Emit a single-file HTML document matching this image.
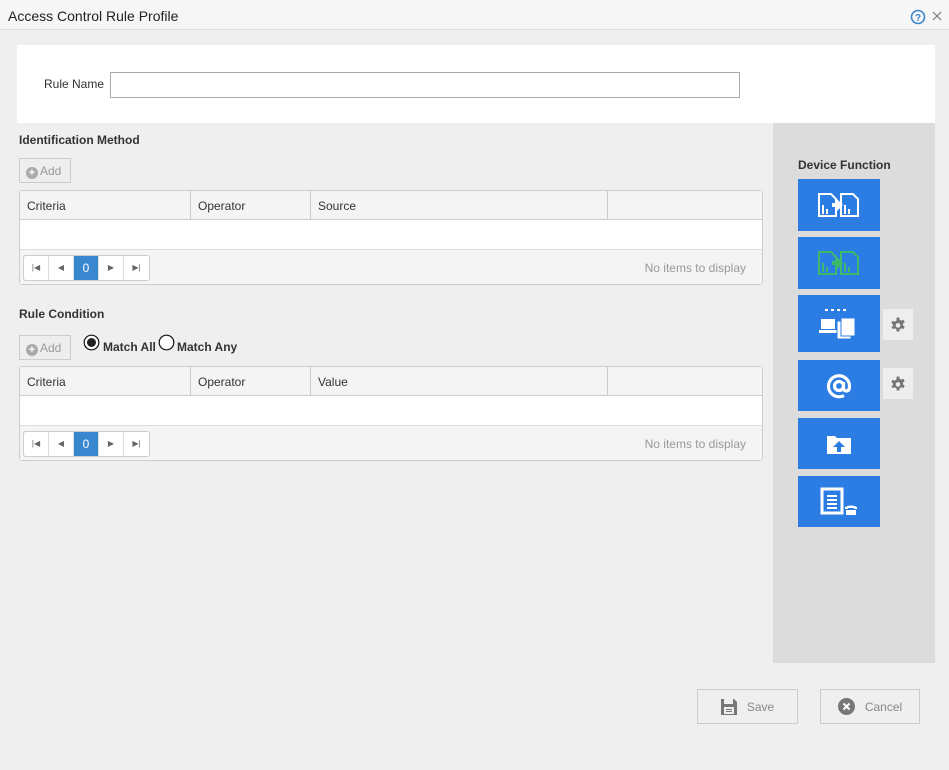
<!DOCTYPE html>
<html><head><meta charset="utf-8"><style>
*{box-sizing:border-box;margin:0;padding:0}
body{width:949px;height:770px;background:#efefef;font-family:"Liberation Sans",Arial,sans-serif;font-size:12px;color:#333;position:relative;overflow:hidden}
.abs{position:absolute}
.title{left:0;top:0;width:949px;height:30px;background:#f6f6f6;border-bottom:1px solid #ddd;font-size:14px;padding:8px 0 0 8px;color:#222}
.white{left:17px;top:45px;width:918px;height:78px;background:#fff}
.inp{left:110px;top:72px;width:630px;height:26px;border:1px solid #aaa;background:#fff}
.lbl{font-size:12px}
.h{font-weight:bold;font-size:12px;color:#333}
.add{width:52px;height:25px;border:1px solid #ccc;background:#eee;color:#999;font-size:12px;padding:5px 0 0 6px}
.add span{display:inline-block;width:12px;height:12px;border-radius:50%;background:#aaa;color:#fff;font-size:11px;line-height:12px;text-align:center;font-weight:bold;margin-right:2px;vertical-align:-1px}
.grid{left:19px;width:744px;border:1px solid #ccc;border-radius:3px;background:#fff}
.gh{height:29px;background:#f4f4f4;border-bottom:1px solid #ccc;display:flex}
.gh div{border-right:1px solid #ccc;padding:8px 7px;font-size:12px}
.gb{height:30px;background:#fff;border-bottom:1px solid #ddd}
.gp{height:34px;background:#f4f4f4;position:relative}
.pager{position:absolute;left:3px;top:5px;height:26px;border:1px solid #ccc;border-radius:3px;display:flex;background:#fff}
.pager div{width:25px;height:24px;text-align:center;line-height:24px;font-size:8px;color:#666;border-right:1px solid #ddd}
.pager .on{background:#3a87cf;color:#fff;font-size:12px}
.noi{position:absolute;right:16px;top:11px;color:#999}
.side{left:773px;top:123px;width:162px;height:540px;background:#dcdcdc}
.bb{left:798px;width:82px;background:#2b7de3;display:flex;align-items:center;justify-content:center}
.gear{left:883px;width:30px;height:31px;background:#eee;display:flex;align-items:center;justify-content:center}
.btn{top:689px;height:35px;border:1px solid #ccc;background:#efefef;color:#888;font-size:12px;display:flex;align-items:center;justify-content:center}
</style></head><body>
<div class="abs title">Access Control Rule Profile</div>
<svg class="abs" style="left:910px;top:9px" width="16" height="16"><circle cx="8" cy="8" r="6.5" fill="none" stroke="#3a87cf" stroke-width="1.6"/><text x="8" y="12" font-size="10" text-anchor="middle" fill="#3a87cf" font-weight="bold" font-family="Liberation Sans">?</text></svg>
<svg class="abs" style="left:932px;top:11px" width="10" height="10"><path d="M1 1L9 9M9 1L1 9" stroke="#777" stroke-width="1.2"/></svg>
<div class="abs white"></div>
<div class="abs lbl" style="left:44px;top:77px">Rule Name</div>
<div class="abs inp"></div>
<div class="abs h" style="left:19px;top:133px">Identification Method</div>
<div class="abs add" style="left:19px;top:158px"><span>+</span>Add</div>
<div class="abs grid" style="top:190px">
<div class="gh"><div style="width:171px">Criteria</div><div style="width:120px">Operator</div><div style="width:297px">Source</div></div>
<div class="gb"></div>
<div class="gp"><div class="pager"><div>|◀</div><div>◀</div><div class="on">0</div><div>▶</div><div style="border:none">▶|</div></div><span class="noi">No items to display</span></div>
</div>
<div class="abs h" style="left:19px;top:307px">Rule Condition</div>
<div class="abs add" style="left:19px;top:335px"><span>+</span>Add</div>
<svg class="abs" style="left:83px;top:334px" width="18" height="18"><circle cx="8.5" cy="8.5" r="7.3" fill="#fff" stroke="#111" stroke-width="1.2"/><circle cx="8.5" cy="8.5" r="4.5" fill="#222"/></svg>
<div class="abs h" style="left:103px;top:340px">Match All</div>
<svg class="abs" style="left:158px;top:334px" width="18" height="18"><circle cx="8.5" cy="8.5" r="7.3" fill="#fff" stroke="#111" stroke-width="1.2"/></svg>
<div class="abs h" style="left:177px;top:340px">Match Any</div>
<div class="abs grid" style="top:366px">
<div class="gh"><div style="width:171px">Criteria</div><div style="width:120px">Operator</div><div style="width:297px">Value</div></div>
<div class="gb"></div>
<div class="gp"><div class="pager"><div>|◀</div><div>◀</div><div class="on">0</div><div>▶</div><div style="border:none">▶|</div></div><span class="noi">No items to display</span></div>
</div>
<div class="abs side"></div>
<div class="abs h" style="left:798px;top:158px">Device Function</div>
<div class="abs bb" style="top:179px;height:52px"><svg width="46" height="28"><g fill="none" stroke="#fff" stroke-width="2"><path d="M3 3h12l5 5v17H3z"/><path d="M25 3h12l5 5v17H25z"/></g><g fill="#fff"><rect x="6" y="14" width="2" height="9"/><rect x="10" y="18" width="2" height="5"/><rect x="28" y="14" width="2" height="9"/><rect x="32" y="18" width="2" height="5"/><path d="M16 12h5v-4l6 6-6 6v-4h-5z"/></g></svg></div>
<div class="abs bb" style="top:237px;height:52px"><svg width="46" height="28"><g fill="none" stroke="#3cba6a" stroke-width="2"><path d="M3 3h12l5 5v17H3z"/><path d="M25 3h12l5 5v17H25z"/></g><g fill="#3cba6a"><rect x="6" y="14" width="2" height="9"/><rect x="10" y="18" width="2" height="5"/><rect x="28" y="14" width="2" height="9"/><rect x="32" y="18" width="2" height="5"/><path d="M16 12h5v-4l6 6-6 6v-4h-5z"/></g></svg></div>
<div class="abs bb" style="top:295px;height:57px"><svg width="40" height="34"><g fill="#fff"><rect x="6" y="2" width="3" height="2"/><rect x="12" y="2" width="3" height="2"/><rect x="18" y="2" width="3" height="2"/><rect x="24" y="2" width="3" height="2"/><rect x="2" y="12" width="14" height="10"/><rect x="0" y="23" width="18" height="3"/><rect x="18" y="14" width="14" height="18" stroke="#2b7de3" stroke-width="1"/><rect x="22" y="11" width="14" height="18" stroke="#2b7de3" stroke-width="1"/></g></svg></div>
<div class="abs gear" style="top:309px"><svg width="16" height="16" viewBox="0 0 16 16"><path d="M6.7 0h2.6l.4 2.2 1.6.9 2.1-.8 1.3 2.3-1.7 1.4v1.9l1.7 1.4-1.3 2.3-2.1-.8-1.6.9-.4 2.3H6.7l-.4-2.3-1.6-.9-2.1.8-1.3-2.3L3 8.9V7L1.3 5.6l1.3-2.3 2.1.8 1.6-.9z" fill="#777" transform="translate(0 .5)"/><circle cx="8" cy="8.4" r="2.3" fill="#eee"/></svg></div>
<div class="abs bb" style="top:360px;height:51px"><svg width="30" height="30" viewBox="0 0 30 30"><circle cx="15" cy="15" r="4.5" fill="none" stroke="#fff" stroke-width="3.2"/><path d="M19.5 11v6q0 3 3 3t3-5A10.5 10.5 0 1 0 20 24.5" fill="none" stroke="#fff" stroke-width="3.2"/></svg></div>
<div class="abs gear" style="top:368px"><svg width="16" height="16" viewBox="0 0 16 16"><path d="M6.7 0h2.6l.4 2.2 1.6.9 2.1-.8 1.3 2.3-1.7 1.4v1.9l1.7 1.4-1.3 2.3-2.1-.8-1.6.9-.4 2.3H6.7l-.4-2.3-1.6-.9-2.1.8-1.3-2.3L3 8.9V7L1.3 5.6l1.3-2.3 2.1.8 1.6-.9z" fill="#777" transform="translate(0 .5)"/><circle cx="8" cy="8.4" r="2.3" fill="#eee"/></svg></div>
<div class="abs bb" style="top:418px;height:51px"><svg width="26" height="22"><path d="M1 3h8l2 2h14v16H1z" fill="#fff"/><path d="M13 8l6 6h-4v5h-4v-5H7z" fill="#2b7de3"/></svg></div>
<div class="abs bb" style="top:476px;height:51px"><svg width="42" height="30"><rect x="4" y="2" width="20" height="24" fill="none" stroke="#fff" stroke-width="3"/><g fill="#fff"><rect x="9" y="8" width="10" height="2"/><rect x="9" y="12" width="10" height="2"/><rect x="9" y="16" width="10" height="2"/><rect x="9" y="20" width="10" height="2"/><path d="M27 20q6-3 12 0v2h-3v-1h-6v1h-3z"/><rect x="28" y="23" width="10" height="5"/></g></svg></div>
<div class="abs btn" style="left:697px;width:101px"><svg width="16" height="16" style="margin-right:10px"><path d="M0 0h13l3 3v13H0z" fill="#777"/><rect x="3" y="0" width="9" height="5" fill="#eee"/><rect x="3" y="8" width="10" height="7" fill="#eee"/><rect x="5" y="10" width="6" height="1" fill="#777"/><rect x="5" y="12" width="6" height="1" fill="#777"/></svg>Save</div>
<div class="abs btn" style="left:820px;width:100px"><svg width="17" height="17" style="margin-right:10px"><circle cx="8.5" cy="8.5" r="8.5" fill="#777"/><path d="M5.5 5.5l6 6M11.5 5.5l-6 6" stroke="#fff" stroke-width="2"/></svg>Cancel</div>
</body></html>
